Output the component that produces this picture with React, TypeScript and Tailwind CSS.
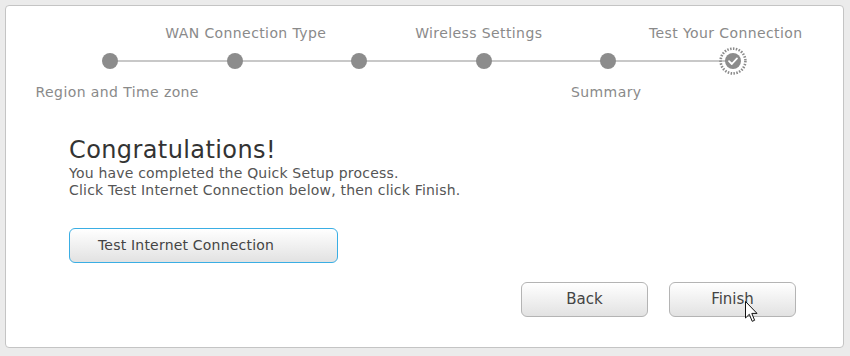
import React from 'react';

const steps = [
  { label: 'Region and Time zone', pos: 'bottom', shift: 'translate-x-[7px]' },
  { label: 'WAN Connection Type', pos: 'top', shift: 'translate-x-[11px]' },
  { label: '', pos: 'none', shift: '' },
  { label: 'Wireless Settings', pos: 'top', shift: '-translate-x-[5px]' },
  { label: 'Summary', pos: 'bottom', shift: '-translate-x-[2px]' },
  { label: 'Test Your Connection', pos: 'top', shift: '-translate-x-[7px]', done: true }
];

const font = { fontFamily: '"DejaVu Sans", Verdana, sans-serif' };

const CurrentStep = (): JSX.Element => (
  <svg width="28" height="28" viewBox="0 0 28 28">
    <circle cx="14" cy="14" r="12.4" fill="none" stroke="#8a8a8a" strokeWidth="2.6" strokeDasharray="1.5 1.4" />
    <circle cx="14" cy="14" r="8" fill="#8c8c8c" />
    <path d="M10 14.2 L12.8 17 L18 11.4" fill="none" stroke="#fff" strokeWidth="1.8" strokeLinecap="round" strokeLinejoin="round" />
  </svg>
);

const Label = ({ text, shift }: { text: string; shift: string }): JSX.Element => (
  <div className="flex justify-center whitespace-nowrap text-[14px] leading-4 tracking-[0.4px] text-[#8a8a8a]">
    <span className={shift}>{text}</span>
  </div>
);

const Stepper = (): JSX.Element => (
  <div className="ml-[42px] w-[747px]">
    <div className="grid grid-cols-6 h-4">
      {steps.map((s, i) => (
        <Label key={i} text={s.pos === 'top' ? s.label : ''} shift={s.shift} />
      ))}
    </div>
    <div className="relative mt-[6px] grid grid-cols-6 h-7">
      <div className="absolute left-[62px] right-[62px] top-[13px] h-[2px] bg-[#c8c8c8]" />
      {steps.map((s, i) => (
        <div key={i} className="relative flex items-center justify-center">
          {s.done ? <CurrentStep /> : <div className="h-4 w-4 rounded-full bg-[#8c8c8c]" />}
        </div>
      ))}
    </div>
    <div className="mt-[9px] grid grid-cols-6 h-4">
      {steps.map((s, i) => (
        <Label key={i} text={s.pos === 'bottom' ? s.label : ''} shift={s.shift} />
      ))}
    </div>
  </div>
);

const Cursor = (): JSX.Element => (
  <svg className="absolute left-[745px] top-[301px]" width="14" height="23" viewBox="0 0 14 23">
    <path d="M0.5 0.5 L0.5 17 L4.3 13.3 L7.2 20.3 L9.6 19.3 L6.8 12.4 L12 12.4 Z" fill="#fff" stroke="#111" strokeWidth="1" strokeLinejoin="round" />
  </svg>
);

const btn = 'rounded-[6px] border bg-gradient-to-b from-[#ffffff] to-[#e2e2e2] text-[#444]';

export default function App(): JSX.Element {
  return (
    <div className="relative h-[356px] w-[850px] bg-[#ebebeb] pt-[5px] pl-[5px]" style={font}>
      <div className="h-[343px] w-[839px] rounded-[4px] border border-[#c4c4c4] bg-white pt-[19px]">
        <Stepper />
        <div className="ml-[63px] mt-[36px]">
          <h1 className="text-[24px] leading-[28px] tracking-[0.4px] text-[#333]">Congratulations!</h1>
          <p className="mt-[1px] text-[14px] leading-[17px] tracking-[0.2px] text-[#555]">
            You have completed the Quick Setup process.
            <br />
            Click Test Internet Connection below, then click Finish.
          </p>
          <button
            className={`${btn} mt-[29px] flex h-[35px] w-[269px] items-center border-[#3aaee4] pl-[28px] text-[14px] tracking-[0.2px]`}
          >
            Test Internet Connection
          </button>
        </div>
        <div className="mr-[47px] mt-[19px] flex justify-end gap-[21px]">
          <button className={`${btn} h-[35px] w-[127px] border-[#b4b4b4] text-[15px]`}>Back</button>
          <button className={`${btn} h-[35px] w-[127px] border-[#b4b4b4] text-[15px]`}>Finish</button>
        </div>
      </div>
      <Cursor />
    </div>
  );
}
